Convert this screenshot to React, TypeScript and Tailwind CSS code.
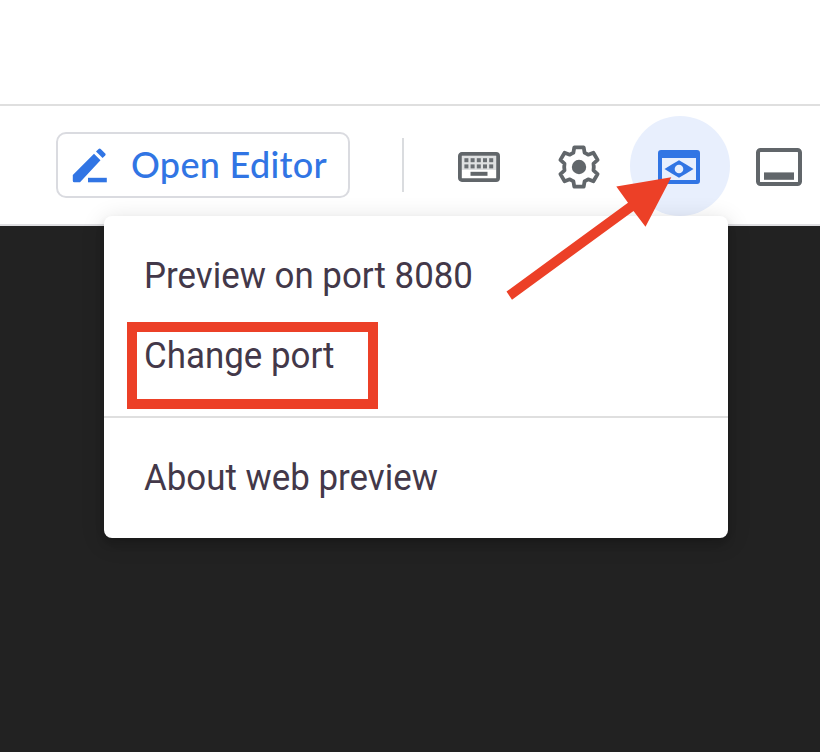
function PencilIcon() {
  return (
    <svg className="block" width="36" height="38" viewBox="0 0 36 38" fill="#3175e4">
      <path d="M.8 29 22 7.800l6.500 6.500L8 36.300H2.300A1.500 1.500 0 0 1 .8 34.800z" />
      <path d="m24 5.500 2.600-2.600a1.500 1.500 0 0 1 2.100 0L33.200 7.400a1.500 1.500 0 0 1 0 2.100l-2.600 2.600z" />
      <path d="M16 31.800h18.800v4.500H16z" />
    </svg>
  );
}

function KeyboardIcon() {
  const columns = [6.4, 12.6, 18.8, 25, 31.2];
  return (
    <svg className="block" width="42" height="30" viewBox="0 0 42 30">
      <rect x="1.900" y="1.900" width="38.200" height="26.200" rx="2" fill="#fff" stroke="#61666a" strokeWidth="3.800" />
      <path d="M4 4h34v14H4z" fill="#dfe1e2" />
      {[6.2, 12.4].map((y) =>
        columns.map((x) => <rect key={`${x}-${y}`} x={x} y={y} width="4" height="4" fill="#6a6f73" />),
      )}
      <path d="M12.500 19.800h17v4h-17z" fill="#61666a" />
    </svg>
  );
}

function GearIcon() {
  return (
    <svg className="block" width="44" height="44" viewBox="0 0 44 44">
      <path
        d="M17.300 2.300h9.400l.9 5.400q1.700.6 3.600 2l5.200-2 4.200 7.200-4.100 3.700q.6 3.400 0 6.800l4.100 3.700-4.200 7.200-5.200-2q-1.900 1.400-3.600 2l-.9 5.400h-9.400l-.9-5.400q-1.700-.6-3.600-2l-5.200 2-4.200-7.200 4.100-3.700q-.6-3.400 0-6.800l-4.100-3.700 4.200-7.200 5.200 2q1.900-1.400 3.600-2z"
        fill="#fff"
        stroke="#61666a"
        strokeWidth="3.800"
        strokeLinejoin="round"
      />
      <circle cx="22" cy="22" r="7.200" fill="#61666a" />
    </svg>
  );
}

function WebPreviewIcon() {
  return (
    <svg className="block" width="42" height="34" viewBox="0 0 42 34">
      <path
        fill="#3175e4"
        fillRule="evenodd"
        d="M3 0h36a3 3 0 0 1 3 3v28a3 3 0 0 1-3 3H3a3 3 0 0 1-3-3V3a3 3 0 0 1 3-3zM4 8v22h34V8z"
      />
      <path fill="#3175e4" d="M6.500 19c5-3 9.500-6 14.500-8.800C26 13 30.500 16 35.500 19c-5 3-9.500 6-14.500 8.800C16 25 11.500 22 6.500 19z" />
      <circle cx="21" cy="19" r="4.300" fill="#e8effd" />
    </svg>
  );
}

function WindowIcon() {
  return (
    <svg className="block" width="46" height="38" viewBox="0 0 46 38">
      <rect x="2" y="2" width="42" height="34" rx="2.500" fill="#fff" stroke="#61666a" strokeWidth="4" />
      <path d="M8 24.400h30v7.400H8z" fill="#61666a" />
    </svg>
  );
}

function MenuItem({ label }: { label: string }) {
  return (
    <div className="flex h-20 items-center px-10">
      <span className="origin-left scale-x-[0.969] whitespace-nowrap text-[36px] leading-none text-[#433849]">
        {label}
      </span>
    </div>
  );
}

export default function App() {
  return (
    <div className="relative flex h-[752px] w-[820px] flex-col overflow-hidden bg-[#222222] font-['Roboto',sans-serif]">
      <div className="h-[106px] shrink-0 border-b-2 border-[#dfdfdf] bg-white" />
      <div className="flex h-[120px] shrink-0 items-start border-b-2 border-[#dfdfe2] bg-white pl-14">
        <button className="mt-[26px] flex h-[66px] w-[294px] shrink-0 items-center rounded-[10px] border-2 border-[#dadbe0] pl-3.5">
          <PencilIcon />
          <span className="ml-[23px] whitespace-nowrap pb-0.5 font-['Lato',sans-serif] text-[36px] font-medium leading-none tracking-[0.3px] text-[#3175e4]">
            Open Editor
          </span>
        </button>
        <div className="ml-[52px] mt-8 h-[54px] w-0.5 shrink-0 bg-[#dadcdf]" />
        <div className="ml-[54px] mt-[46px] shrink-0">
          <KeyboardIcon />
        </div>
        <div className="ml-[57px] mt-[39px] shrink-0">
          <GearIcon />
        </div>
        <div className="ml-[29px] mt-2.5 flex size-[100px] shrink-0 items-center justify-center rounded-full bg-[#e8effd] pr-0.5 pt-0.5">
          <WebPreviewIcon />
        </div>
        <div className="ml-[26px] mt-[42px] shrink-0">
          <WindowIcon />
        </div>
      </div>

      <div className="absolute left-[104px] top-[216px] flex w-[624px] flex-col rounded-[8px] bg-white shadow-[0_4px_24px_rgba(0,0,0,0.14),0_6px_8px_rgba(0,0,0,0.16)]">
        <div className="py-5">
          <MenuItem label="Preview on port 8080" />
          <MenuItem label="Change port" />
        </div>
        <div className="border-t-2 border-[#dfdfdf] py-5">
          <MenuItem label="About web preview" />
        </div>
      </div>

      <div className="absolute left-[127px] top-[322px] h-[87px] w-[251px] border-[10px] border-[#ec4027]" />
      <svg className="absolute left-[500px] top-[170px]" width="180" height="140" viewBox="500 170 180 140">
        <path d="m506.500 291.500 121.500-88.700-11.700-16.400 55-9.100-25.800 49.400-12-15.700L512 299.700z" fill="#ec4027" />
      </svg>
    </div>
  );
}
